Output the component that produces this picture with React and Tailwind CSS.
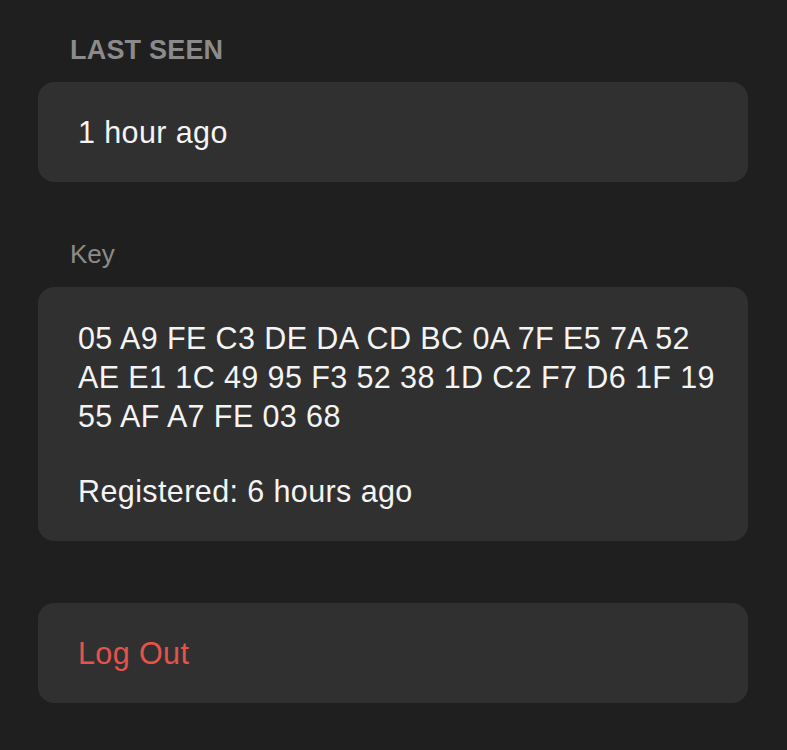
export default function App() {
  const font = { fontFamily: '"Liberation Sans", Arial, sans-serif' };
  return (
    <div className="w-[787px] h-[750px] bg-[#1f1f1f] overflow-hidden" style={font}>
      <div className="pl-[38px] pr-[39px] pt-[34px]">
        <div className="pl-[32px] text-[27px] leading-[32px] font-bold text-[#8b8b8b] tracking-[0.2px]">
          LAST SEEN
        </div>
        <div className="mt-[16px] rounded-[16px] bg-[#303030] px-[40px] py-[30px] text-[30.5px] leading-[40px] text-[#f4f4f4] tracking-[0.4px]">
          1 hour ago
        </div>

        <div className="mt-[56px] pl-[32px] text-[26px] leading-[32px] text-[#8b8b8b]">
          Key
        </div>
        <div className="mt-[17px] rounded-[16px] bg-[#303030] px-[40px] pt-[32px] pb-[30px] text-[30.5px] leading-[39px] text-[#f4f4f4] tracking-[0.4px]">
          <div className="whitespace-nowrap">05 A9 FE C3 DE DA CD BC 0A 7F E5 7A 52</div>
          <div className="whitespace-nowrap">AE E1 1C 49 95 F3 52 38 1D C2 F7 D6 1F 19</div>
          <div className="whitespace-nowrap">55 AF A7 FE 03 68</div>
          <div className="mt-[36px] whitespace-nowrap">Registered: 6 hours ago</div>
        </div>

        <div className="mt-[62px] rounded-[16px] bg-[#303030] px-[40px] py-[30px] text-[30.5px] leading-[40px] text-[#e5534b] tracking-[0.4px]">
          Log Out
        </div>
      </div>
    </div>
  );
}
